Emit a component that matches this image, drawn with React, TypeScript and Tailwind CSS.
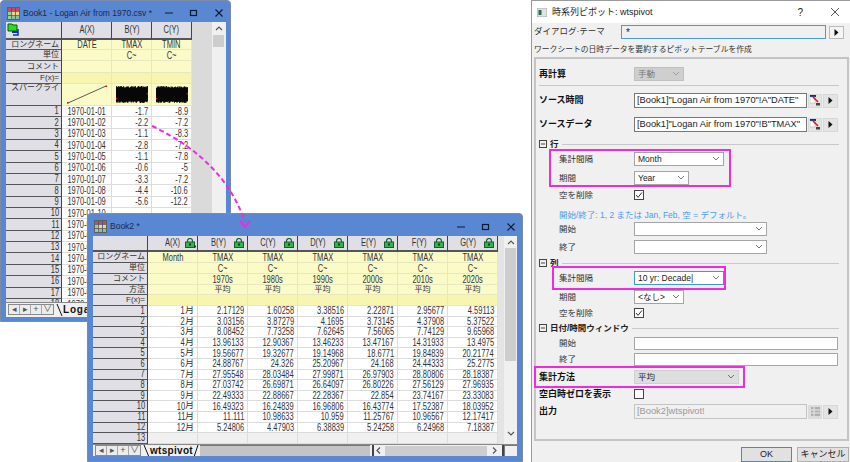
import React from "react";

const tx = "font-['Liberation_Sans','Noto_Sans_CJK_JP',sans-serif]";

function N({ children, o = "right", b }: { children: React.ReactNode; o?: "right" | "center" | "left"; b?: boolean }) {
  const cls = o === "right" ? "origin-right" : o === "center" ? "origin-center" : "origin-left";
  return <span className={`inline-block scale-x-[0.75] ${cls} whitespace-nowrap text-[10px] ${b ? "font-bold" : ""}`}>{children}</span>;
}

function BookIcon() {
  return (
    <svg width="13" height="13" viewBox="0 0 13 13" className="shrink-0">
      <rect x="0.5" y="0.5" width="12" height="12" fill="#f4f4f4" stroke="#606060" />
      <rect x="1" y="1" width="11" height="3" fill="#c04a6a" />
      <rect x="1" y="5" width="3" height="7" fill="#9ad08a" />
      <rect x="5" y="5" width="7" height="3" fill="#e8d98a" />
      <rect x="5" y="9" width="7" height="3" fill="#8ac0a8" />
      <path d="M4.5 1v11M8.5 1v11M1 4.5h11M1 8.5h11" stroke="#505060" strokeWidth="0.8" />
    </svg>
  );
}

function Caption() {
  return (
    <div className="flex items-center gap-[15px] shrink-0">
      <svg width="10" height="10" viewBox="0 0 10 10"><path d="M1 5h8" stroke="#0d1a33" strokeWidth="1" /></svg>
      <svg width="10" height="10" viewBox="0 0 10 10"><rect x="1.5" y="2.5" width="6" height="5" fill="none" stroke="#0d1a33" strokeWidth="1.2" /></svg>
      <svg width="10" height="10" viewBox="0 0 10 10"><path d="M1.5 1.5l7 7M8.5 1.5l-7 7" stroke="#0d1a33" strokeWidth="1.2" /></svg>
    </div>
  );
}

function Lock({ dot }: { dot?: boolean }) {
  return (
    <svg width={dot ? 11 : 10} height="10" viewBox={dot ? "0 0 11 10" : "0 0 10 10"} className="shrink-0">
      <path d="M2.5 4.5V3a2.5 2.5 0 0 1 5 0v1.5" fill="none" stroke="#14602c" strokeWidth="1.2" />
      <rect x="0.5" y="4" width="9" height="5.5" fill="#38b24e" stroke="#14602c" />
      <rect x="4" y="5.5" width="2" height="2" fill="#0c3d1b" />
      {dot && <rect x="9.2" y="7.6" width="1.8" height="1.8" fill="#222" />}
    </svg>
  );
}

function HeadCell({ w, h, children, className = "" }: { w: number; h: number; children?: React.ReactNode; className?: string }) {
  return (
    <div
      style={{ width: w, height: h }}
      className={`shrink-0 flex items-center justify-end pr-[2px] bg-[#dfdfe5] border-b border-b-[#555] border-r border-r-[#444] text-[8px] leading-none text-[#333] overflow-hidden whitespace-nowrap ${className}`}
    >
      {children}
    </div>
  );
}

function DataCell({ w, h, children, className = "", center }: { w: number; h: number; children?: React.ReactNode; className?: string; center?: boolean }) {
  return (
    <div
      style={{ width: w, height: h }}
      className={`shrink-0 flex items-center overflow-hidden ${center ? "justify-center" : "justify-end pr-[3px]"} border-b border-r border-[#dcdcdc] text-[#333] whitespace-nowrap ${className}`}
    >
      {children}
    </div>
  );
}

function Noise({ seed, w = 32, h = 17 }: { seed: number; w?: number; h?: number }) {
  let d = "";
  let s = seed;
  for (let i = 0; i < w * 2; i++) {
    s = (s * 9301 + 49297) % 233280;
    const a = (s / 233280) * 2;
    s = (s * 9301 + 49297) % 233280;
    const b = h - (s / 233280) * 2;
    d += `M${i / 2} ${a}V${b}`;
  }
  return (
    <svg width={w} height={h} viewBox={`0 0 ${w} ${h}`} className="shrink-0">
      <path d={d} stroke="#000" strokeWidth="0.9" fill="none" />
      <rect x="0" y="12" width="1.4" height="1.4" fill="#e01010" />
      <rect x={w - 1.4} y="7" width="1.4" height="1.4" fill="#e01010" />
    </svg>
  );
}

function TabNav() {
  return (
    <div className="flex h-[11px] border border-[#8a8a8a] bg-[#ececec] text-[#555] text-[9px] leading-none shrink-0">
      {["◂", "▸", "+", "∨"].map((c, i) => (
        <div key={i} className="w-[11px] flex items-center justify-center border-r border-[#a8a8a8] last:border-r-0">
          {c}
        </div>
      ))}
    </div>
  );
}

function Slant({ back }: { back?: boolean }) {
  return (
    <svg width={back ? 9 : 7} height="12" viewBox={back ? "0 0 9 12" : "0 0 7 12"} className="shrink-0">
      {back ? <path d="M3 0L8 12" stroke="#111" strokeWidth="1" /> : <path d="M5 0L1 12" stroke="#111" strokeWidth="1" />}
    </svg>
  );
}

function VBar({ thumbTop, thumbH, down }: { thumbTop: number; thumbH: number; down?: boolean }) {
  return (
    <div className="w-[13px] shrink-0 bg-[#f0f0f0] flex flex-col items-center">
      <svg width="8" height="10" viewBox="0 0 8 10" className="mt-[2px] shrink-0"><path d="M1 6l3-3 3 3" fill="none" stroke="#555" strokeWidth="1.2" /></svg>
      <div style={{ marginTop: thumbTop, height: thumbH }} className="w-[11px] bg-[#cdcdcd] shrink-0" />
      {down && (
        <svg width="8" height="10" viewBox="0 0 8 10" className="mt-auto mb-[6px] shrink-0"><path d="M1 4l3 3 3-3" fill="none" stroke="#555" strokeWidth="1.2" /></svg>
      )}
    </div>
  );
}

const dates = ["-1.7|-8.9", "-2.2|-7.2", "-1.1|-8.3", "-2.8|-7.2", "-1.1|-7.8", "-0.6|-5", "-3.3|-7.2", "-4.4|-10.6", "-5.6|-12.2", "|", "|", "|", "|", "|", "|", "|", "|", "|"];

function Book1() {
  const H = 11.35;
  return (
    <div className={`absolute left-0 top-0 w-[231px] h-[322px] bg-[#5a87d1] rounded-t-[4px] border border-[#7a8aa8] flex flex-col pl-[5px] pr-[4px] pb-[4px] ${tx}`}>
      <div className="h-[21px] shrink-0 flex items-center pt-[3px] text-[#1b2a4a] text-[8.5px] pl-[1px] whitespace-nowrap">
        <BookIcon />
        <span className="ml-[3px]">Book1 - Logan Air from 1970.csv *</span>
        <div className="ml-auto pr-[2px]"><Caption /></div>
      </div>
      <div className="flex-1 min-h-0 flex flex-col bg-[#f0f0f0] overflow-hidden">
        <div className="flex-1 min-h-0 flex overflow-hidden">
          <div className="w-[206px] shrink-0 flex bg-[#dadada] overflow-hidden">
            <div className="w-[186px] shrink-0 flex flex-col overflow-hidden bg-white">
              <div className="flex shrink-0">
                <HeadCell w={56} h={18} className="border-b-2 !justify-start pl-[1px]">
                  <svg width="13" height="13" viewBox="0 0 13 13" className="-mt-[2px]">
                    <path d="M1 1h4l1 1h4v6H1z" fill="#22e022" stroke="#0a5a0a" />
                    <rect x="5" y="8" width="6" height="2" fill="#1030c0" />
                    <path d="M11 6v6H6" fill="none" stroke="#1030c0" strokeWidth="1.5" />
                  </svg>
                </HeadCell>
                <HeadCell w={50} h={18} className="!justify-center !pr-0 border-b-2"><N o="center">A(X)</N></HeadCell>
                <HeadCell w={40} h={18} className="!justify-center !pr-0 border-b-2"><N o="center">B(Y)</N></HeadCell>
                <HeadCell w={40} h={18} className="!justify-center !pr-0 border-b-2"><N o="center">C(Y)</N></HeadCell>
              </div>
              {[
                ["ロングネーム", 10, "DATE", "TMAX", "TMIN", "bg-[#fbfbc8]"],
                ["単位", 11, "", "C~", "C~", "bg-[#fbfbc8]"],
                ["コメント", 12, "", "", "", "bg-[#fbfbc8]"],
                ["F(x)=", 11, "", "", "", "bg-[#f8f5b0]"],
              ].map((r) => (
                <div className="flex shrink-0" key={r[0] as string}>
                  <HeadCell w={56} h={r[1] as number} className="border-r-[#444]">{r[0]}</HeadCell>
                  {[2, 3, 4].map((c, i) => (
                    <DataCell key={c} w={i === 0 ? 50 : 40} h={r[1] as number} center className={`${r[5]} border-[#e8e8c0]`}>
                      <N o="center">{r[c]}</N>
                    </DataCell>
                  ))}
                </div>
              ))}
              <div className="flex shrink-0">
                <HeadCell w={56} h={22} className="!items-start">スパークライ</HeadCell>
                <DataCell w={50} h={22} center className="bg-[#fbfbc8] border-[#e8e8c0]">
                  <svg width="42" height="20" viewBox="0 0 42 20">
                    <path d="M2 18L40 1" stroke="#333" strokeWidth="0.8" />
                    <rect x="1" y="17" width="1.6" height="1.6" fill="#e01010" />
                    <rect x="39.5" y="0.5" width="1.6" height="1.6" fill="#e01010" />
                  </svg>
                </DataCell>
                <DataCell w={40} h={22} center className="bg-[#fbfbc8] border-[#e8e8c0]"><Noise seed={17} /></DataCell>
                <DataCell w={40} h={22} center className="bg-[#fbfbc8] border-[#e8e8c0]"><Noise seed={91} /></DataCell>
              </div>
              {dates.map((v, i) => {
                const [b, c] = v.split("|");
                return (
                  <div className="flex shrink-0" key={i}>
                    <HeadCell w={56} h={H}><N>{i + 1}</N></HeadCell>
                    <DataCell w={50} h={H} center><N o="center">{`1970-01-${String(i + 1).padStart(2, "0")}`}</N></DataCell>
                    <DataCell w={40} h={H}><N>{b}</N></DataCell>
                    <DataCell w={40} h={H}><N>{c}</N></DataCell>
                  </div>
                );
              })}
            </div>
          </div>
          <VBar thumbTop={1} thumbH={12} />
        </div>
        <div className="h-[15px] shrink-0 flex items-start pt-[1px] pl-[2px] bg-[#f0f0f0] border-t border-[#888] overflow-hidden">
          <TabNav />
          <Slant back />
          <span className="text-[10px] font-bold tracking-[0.8px] leading-[12px] text-[#111] whitespace-nowrap">Logan</span>
        </div>
      </div>
    </div>
  );
}

const cols = [
  ["B(Y)", "1970s", "2.17129", "3.03156", "8.08452", "13.96133", "19.56677", "24.88767", "27.95548", "27.03742", "22.49333", "16.49323", "11.111", "5.24806"],
  ["C(Y)", "1980s", "1.60258", "3.87279", "7.73258", "12.90367", "19.32677", "24.326", "28.03484", "26.69871", "22.88667", "16.24839", "10.98633", "4.47903"],
  ["D(Y)", "1990s", "3.38516", "4.1695", "7.62645", "13.46233", "19.14968", "25.20967", "27.99871", "26.64097", "22.28367", "16.96806", "10.959", "6.38839"],
  ["E(Y)", "2000s", "2.22871", "3.73145", "7.56065", "13.47167", "18.6771", "24.168", "26.97903", "26.80226", "22.854", "16.43774", "11.25767", "5.24258"],
  ["F(Y)", "2010s", "2.95677", "4.37908", "7.74129", "14.31933", "19.84839", "24.44333", "28.80806", "27.56129", "23.74167", "17.52387", "10.96567", "6.24968"],
  ["G(Y)", "2020s", "4.59113", "5.37522", "9.65968", "13.4975", "20.21774", "25.2775", "28.18387", "27.96935", "23.33083", "18.03952", "12.17417", "7.18387"],
];

function Book2() {
  const H = 10.6;
  const meta: [string, number, (c: string[]) => React.ReactNode, string, React.ReactNode][] = [
    ["ロングネーム", 11, () => <N o="center">TMAX</N>, "bg-[#fbfbc8]", <N o="center">Month</N>],
    ["単位", 11, () => <N o="center">C~</N>, "bg-[#fbfbc8]", null],
    ["コメント", 11, (c) => <N o="center">{c[1]}</N>, "bg-[#fbfbc8]", null],
    ["方法", 10, () => <span className="text-[8px]">平均</span>, "bg-[#fbfbc8]", null],
    ["F(x)=", 11, () => null, "bg-[#f8f5b0]", null],
  ];
  return (
    <div className={`absolute left-[87px] top-[213px] w-[436px] h-[249px] bg-[#5a87d1] rounded-t-[4px] border border-[#7a8aa8] flex flex-col pl-[5px] pr-[5px] pb-[5px] ${tx}`}>
      <div className="h-[22px] shrink-0 flex items-center pt-[3px] text-[#1b2a4a] text-[8.5px] pl-[1px]">
        <BookIcon />
        <span className="ml-[3px]">Book2 *</span>
        <div className="ml-auto pr-[1px]"><Caption /></div>
      </div>
      <div className="flex-1 min-h-0 flex flex-col bg-[#f0f0f0] overflow-hidden">
        <div className="flex-1 min-h-0 flex overflow-hidden">
          <div className="w-[411px] shrink-0 bg-[#e4e4e4] overflow-hidden">
            <div className="w-[405px] flex flex-col bg-white">
              <div className="flex shrink-0">
                <HeadCell w={55} h={16} className="border-b-2" />
                <HeadCell w={50} h={16} className="!pr-[1px] gap-[5px] border-b-2"><N>A(X)</N><Lock dot /></HeadCell>
                {cols.map((c) => (
                  <HeadCell key={c[0]} w={50} h={16} className="!pr-[3px] gap-[8px] border-b-2"><N>{c[0]}</N><Lock /></HeadCell>
                ))}
              </div>
              {meta.map((m) => (
                <div className="flex shrink-0" key={m[0]}>
                  <HeadCell w={55} h={m[1]}>{m[0]}</HeadCell>
                  <DataCell w={50} h={m[1]} center className={`${m[3]} border-[#e8e8c0]`}>{m[4]}</DataCell>
                  {cols.map((c) => (
                    <DataCell key={c[0]} w={50} h={m[1]} center className={`${m[3]} border-[#e8e8c0]`}>{m[2](c)}</DataCell>
                  ))}
                </div>
              ))}
              {Array.from({ length: 12 }, (_, i) => (
                <div className="flex shrink-0" key={i}>
                  <HeadCell w={55} h={H}><N>{i + 1}</N></HeadCell>
                  <DataCell w={50} h={H}><N>{i + 1}</N><span className="text-[9px]">月</span></DataCell>
                  {cols.map((c) => (
                    <DataCell key={c[0]} w={50} h={H}><N>{c[i + 2]}</N></DataCell>
                  ))}
                </div>
              ))}
              <div className="flex shrink-0">
                <HeadCell w={55} h={H}><N>13</N></HeadCell>
                {[0, 1, 2, 3, 4, 5, 6].map((i) => (
                  <DataCell key={i} w={50} h={H} className="bg-[#f0f0f0]" />
                ))}
              </div>
            </div>
          </div>
          <VBar thumbTop={0} thumbH={113} down />
        </div>
        <div className="h-[12px] shrink-0 flex items-center pl-[2px] bg-[#f0f0f0] border-t border-[#888]">
          <TabNav />
          <Slant back />
          <span className="w-[43px] shrink-0 text-[10px] font-bold tracking-[0.3px] leading-[11px] text-[#111] whitespace-nowrap">wtspivot</span>
          <Slant />
          <div className="w-[170px] h-[11px] shrink-0 bg-[#c4c4c4] border-t border-[#777]" />
          <div className="w-[2px] h-[11px] shrink-0 bg-[#444] ml-[2px]" />
          <svg width="10" height="9" viewBox="0 0 10 9" className="shrink-0"><path d="M6 1.5L3 4.5l3 3" fill="none" stroke="#555" strokeWidth="1.2" /></svg>
          <div className="w-[102px] h-[10px] shrink-0 ml-[1px] bg-[#cdcdcd]" />
          <svg width="10" height="9" viewBox="0 0 10 9" className="ml-[2px] shrink-0"><path d="M4 1.5l3 3-3 3" fill="none" stroke="#555" strokeWidth="1.2" /></svg>
          <div className="w-[2px] h-[11px] shrink-0 bg-[#444] ml-[3px]" />
          <div className="flex-1 h-[11px] border-t border-l border-[#777]" />
        </div>
      </div>
    </div>
  );
}

function Chevron({ color = "#666" }: { color?: string }) {
  return (
    <svg width="8" height="6" viewBox="0 0 8 6" className="shrink-0"><path d="M1 1l3 3 3-3" fill="none" stroke={color} strokeWidth="0.9" /></svg>
  );
}

function Select({ w, h = 14, children, cls = "bg-white border-[#a5a5a5]" }: { w: number; h?: number; children?: React.ReactNode; cls?: string }) {
  return (
    <div style={{ width: w, height: h }} className={`flex items-center justify-between pl-[3px] pr-[3px] border ${cls} text-[8.5px] text-[#222] leading-none`}>
      <span>{children}</span>
      <Chevron />
    </div>
  );
}

function Check({ on }: { on?: boolean }) {
  return (
    <div className="w-[10px] h-[10px] bg-white border border-[#444] flex items-center justify-center">
      {on && (
        <svg width="8" height="8" viewBox="0 0 8 8"><path d="M1 4l2 2.4L7 1.4" fill="none" stroke="#333" strokeWidth="1" /></svg>
      )}
    </div>
  );
}

function Row({ h, mt = 0, label, bold, children }: { h: number; mt?: number; label?: string; bold?: boolean; children?: React.ReactNode }) {
  const indent = bold ? 3 : 23;
  return (
    <div style={{ height: h, marginTop: mt }} className="flex items-center shrink-0">
      <div style={{ width: 98 - indent, marginLeft: indent }} className={`shrink-0 whitespace-nowrap leading-none ${bold ? "font-bold text-[9px] text-[#111]" : "text-[8.5px] text-[#333]"}`}>
        {label}
      </div>
      {children}
    </div>
  );
}

function Section({ label, mt }: { label: string; mt: number }) {
  return (
    <div style={{ marginTop: mt }} className="h-[10px] flex items-center pl-[3px] pr-[8px] shrink-0">
      <svg width="8" height="8" viewBox="0 0 8 8" className="shrink-0"><rect x="0.5" y="0.5" width="7" height="7" fill="none" stroke="#444" /><path d="M2 4h4" stroke="#444" /></svg>
      <span className="ml-[3px] font-bold text-[8.5px] leading-none text-[#222] whitespace-nowrap">{label}</span>
      <div className="flex-1 h-[1px] bg-[#c8c8c8] ml-[3px]" />
    </div>
  );
}

function Arrow() {
  return (
    <div className="w-[15px] h-[14px] bg-[#e4e4e4] border border-[#d8d8d8] flex items-center justify-center ml-[1px]">
      <svg width="5" height="7" viewBox="0 0 5 7"><path d="M0.5 0l4 3.5-4 3.5z" fill="#111" /></svg>
    </div>
  );
}

function Picker() {
  return (
    <div className="w-[14px] h-[14px] bg-[#e4e4e4] border border-[#d8d8d8] flex items-center justify-center ml-[1px]">
      <svg width="11" height="11" viewBox="0 0 11 11">
        <rect x="0" y="0" width="6" height="2" fill="#1a2a80" />
        <rect x="0" y="2" width="5" height="6" fill="#fff" stroke="#999" strokeWidth="0.4" />
        <path d="M3 2l5 5" stroke="#e01818" strokeWidth="1.6" />
        <rect x="6" y="8" width="4" height="2.5" fill="#444" />
      </svg>
    </div>
  );
}

function TextBox({ children, cls = "bg-white border-[#777] text-[#222]" }: { children: React.ReactNode; cls?: string }) {
  return (
    <div className={`w-[173px] h-[15px] border ${cls} flex items-center pl-[2px] text-[9.3px] leading-none whitespace-nowrap overflow-hidden`}>{children}</div>
  );
}

function Dialog() {
  return (
    <div className={`absolute left-[531px] top-0 w-[319px] h-[462px] bg-[#f0f0f0] border-l border-t border-[#9a9a9a] flex flex-col ${tx}`}>
      <div className="h-[22px] shrink-0 bg-white flex items-center pl-[5px] text-[#222]">
        <svg width="10" height="9" viewBox="0 0 10 9" className="shrink-0"><rect width="10" height="9" fill="#dfe3e6" stroke="#8a8a8a" strokeWidth="0.6" /><rect x="1.5" y="2" width="3" height="5" fill="#2f6a50" /></svg>
        <span className="ml-[5px] text-[9px] leading-none whitespace-nowrap">時系列ピボット: wtspivot</span>
        <span className="ml-auto text-[10px] mr-[27px]">?</span>
        <svg width="10" height="10" viewBox="0 0 10 10" className="mr-[10px]"><path d="M1 1l8 8M9 1l-8 8" stroke="#444" strokeWidth="0.9" /></svg>
      </div>
      <div className="flex items-center h-[16px] mt-[1px] shrink-0 pl-[2px]">
        <div className="w-[87px] text-[8.5px] leading-none text-[#333] whitespace-nowrap -mt-[2px]">ダイアログ·テーマ</div>
        <div className="w-[205px] h-[14px] bg-[#f0f0f0] border border-[#4a9ad8] text-[10px] leading-[14px] pl-[4px] text-[#222]">*</div>
        <div className="ml-[3px] w-[15px] h-[13px] bg-[#f4f4f4] border border-[#bbb] flex items-center justify-center">
          <svg width="5" height="7" viewBox="0 0 5 7"><path d="M0.5 0l4 3.5-4 3.5z" fill="#111" /></svg>
        </div>
      </div>
      <div className="h-[15px] mt-[2px] shrink-0 pl-[2px] text-[7.8px] leading-[15px] text-[#333] whitespace-nowrap">ワークシートの日時データを要約するピボットテーブルを作成</div>
      <div className="ml-[2px] mr-[1px] h-[384px] border-2 border-[#c4c4c4] flex flex-col">
        <Row h={14} mt={8} label="再計算" bold>
          <div className="w-[50px] h-[14px] bg-[#cfcfcf] border border-[#c0c0c0] flex items-center justify-between px-[3px] text-[8.5px] text-[#777] leading-none">手動<Chevron color="#999" /></div>
        </Row>
        <div className="h-[1px] bg-[#c8c8c8] mt-[4px] ml-[3px] mr-[8px] shrink-0" />
        <Row h={15} mt={7} label="ソース時間" bold>
          <TextBox>[Book1]"Logan Air from 1970"!A"DATE"</TextBox><Picker /><Arrow />
        </Row>
        <Row h={15} mt={9} label="ソースデータ" bold>
          <TextBox>[Book1]"Logan Air from 1970"!B"TMAX"</TextBox><Picker /><Arrow />
        </Row>
        <Section label="行" mt={7} />
        <Row h={14} mt={3} label="集計間隔"><Select w={90}>Month</Select></Row>
        <Row h={14} mt={5} label="期間"><Select w={55}>Year</Select></Row>
        <Row h={10} mt={5} label="空を削除"><Check on /></Row>
        <div className="h-[12px] mt-[9px] ml-[23px] text-[8.5px] leading-[12px] text-[#4a9cf0] whitespace-nowrap shrink-0">開始/終了: 1, 2 または Jan, Feb, 空 = デフォルト。</div>
        <Row h={14} mt={1} label="開始"><Select w={133} /></Row>
        <Row h={14} mt={4} label="終了"><Select w={133} /></Row>
        <Section label="列" mt={4} />
        <Row h={14} mt={3} label="集計間隔"><Select w={90} cls="bg-white border-[#3f96dc]"><span>10 yr: Decade|</span></Select></Row>
        <Row h={14} mt={5} label="期間"><Select w={50}>&lt;なし&gt;</Select></Row>
        <Row h={10} mt={4} label="空を削除"><Check on /></Row>
        <Section label="日付/時間ウィンドウ" mt={5} />
        <Row h={13} mt={4} label="開始"><div className="w-[204px] h-[13px] bg-white border border-[#a5a5a5]" /></Row>
        <Row h={13} mt={3} label="終了"><div className="w-[204px] h-[13px] bg-white border border-[#a5a5a5]" /></Row>
        <Row h={14} mt={4} label="集計方法" bold><Select w={105} cls="bg-[#dedede] border-[#d0d0d0]">平均</Select></Row>
        <Row h={10} mt={5} label="空白時ゼロを表示" bold><Check /></Row>
        <Row h={15} mt={5} label="出力" bold>
          <TextBox cls="bg-[#f0f0f0] border-[#c4c4c4] text-[#999]">[Book2]wtspivot!</TextBox>
          <div className="w-[14px] h-[14px] bg-[#dcdcdc] ml-[1px] flex items-center justify-center">
            <svg width="9" height="9" viewBox="0 0 9 9"><rect width="9" height="9" fill="#b0b0b0" /><path d="M3 0v9M0 3h9M0 6h9" stroke="#e8e8e8" /></svg>
          </div>
          <Arrow />
        </Row>
      </div>
      <div className="flex justify-end items-center gap-[5px] h-[15px] mt-[6px] pr-[1px] shrink-0">
        <div className="w-[51px] h-[15px] bg-[#e1e1e1] border border-[#3a8ed8] text-center text-[9px] leading-[13px] text-[#222]">OK</div>
        <div className="w-[52px] h-[15px] bg-[#e1e1e1] border border-[#b0b0b0] text-center text-[9px] leading-[13px] text-[#222]">キャンセル</div>
      </div>
    </div>
  );
}

function Overlays() {
  const boxes = [
    "left-[549px] top-[149px] w-[182px] h-[38px]",
    "left-[552px] top-[266px] w-[174px] h-[24px]",
    "left-[534px] top-[366px] w-[211px] h-[22px]",
  ];
  return (
    <>
      {boxes.map((b) => (
        <div key={b} className={`absolute ${b} border-2 border-[#f02ae0] pointer-events-none`} />
      ))}
      <svg className="absolute left-0 top-0 pointer-events-none" width="850" height="462" viewBox="0 0 850 462">
        <path d="M152 126Q224 160 245 222" fill="none" stroke="#f02ae0" strokeWidth="2" strokeDasharray="5 3" />
        <path d="M240 221L245 227L250 221" fill="none" stroke="#f02ae0" strokeWidth="2" />
      </svg>
    </>
  );
}

export default function App() {
  return (
    <div className="relative w-[850px] h-[462px] bg-white overflow-hidden">
      <Book1 />
      <Book2 />
      <Dialog />
      <Overlays />
    </div>
  );
}
